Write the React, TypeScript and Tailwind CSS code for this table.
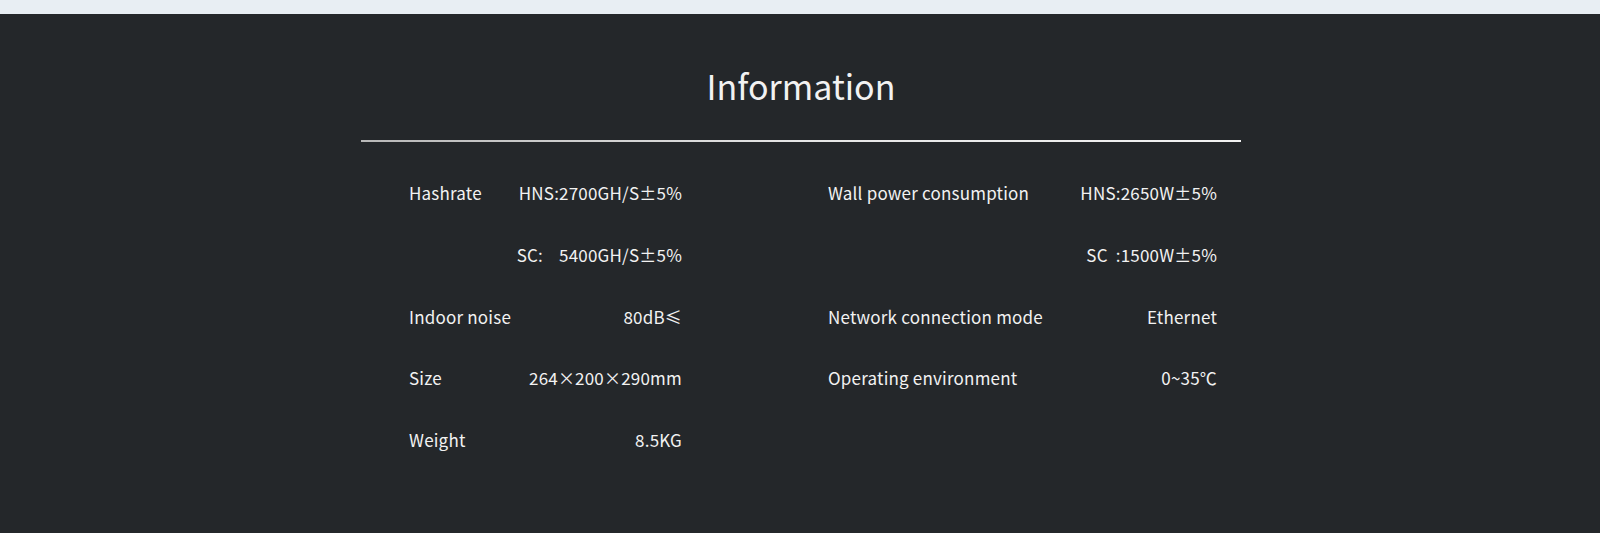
const font = { fontFamily: '"Noto Sans CJK SC", "Noto Sans", sans-serif' };

type Row = { label?: string; value: string; label2?: string; value2?: string };

const rows: Row[] = [
  { label: 'Hashrate', value: 'HNS:2700GH/S±5%', label2: 'Wall power consumption', value2: 'HNS:2650W±5%' },
  { value: 'SC:\u00a0\u00a0\u00a0\u00a05400GH/S±5%', value2: 'SC\u00a0\u00a0:1500W±5%' },
  { label: 'Indoor noise', value: '80dB≤', label2: 'Network connection mode', value2: 'Ethernet' },
  { label: 'Size', value: '264×200×290mm', label2: 'Operating environment', value2: '0~35℃' },
  { label: 'Weight', value: '8.5KG' },
];

export default function App() {
  return (
    <div className="min-h-screen bg-[#24272a] text-[#f2f2f2]" style={font}>
      <div className="h-[14px] bg-[#e8eef3]" />
      <div className="w-[884px] mx-auto pl-[3px] pr-[1px] pt-[45px]">
        <h2 className="text-center text-[34px] leading-[54px]">Information</h2>
        <div className="mt-[27px] h-[2px] bg-gradient-to-r from-[#b8b8b8] via-[#e6e6e6] to-[#f2f2f2]" />
        <div className="mt-[20px]">
          {rows.map((r, i) => (
            <div key={i} className="grid grid-cols-2 h-[61.75px] items-center text-[17px] tracking-[0.2px]">
              <div className="flex justify-between pl-[48px] pr-[119px]">
                <span>{r.label ?? ''}</span>
                <span>{r.value}</span>
              </div>
              <div className="flex justify-between pl-[27px] pr-[24px]">
                <span>{r.label2 ?? ''}</span>
                <span>{r.value2 ?? ''}</span>
              </div>
            </div>
          ))}
        </div>
      </div>
    </div>
  );
}
